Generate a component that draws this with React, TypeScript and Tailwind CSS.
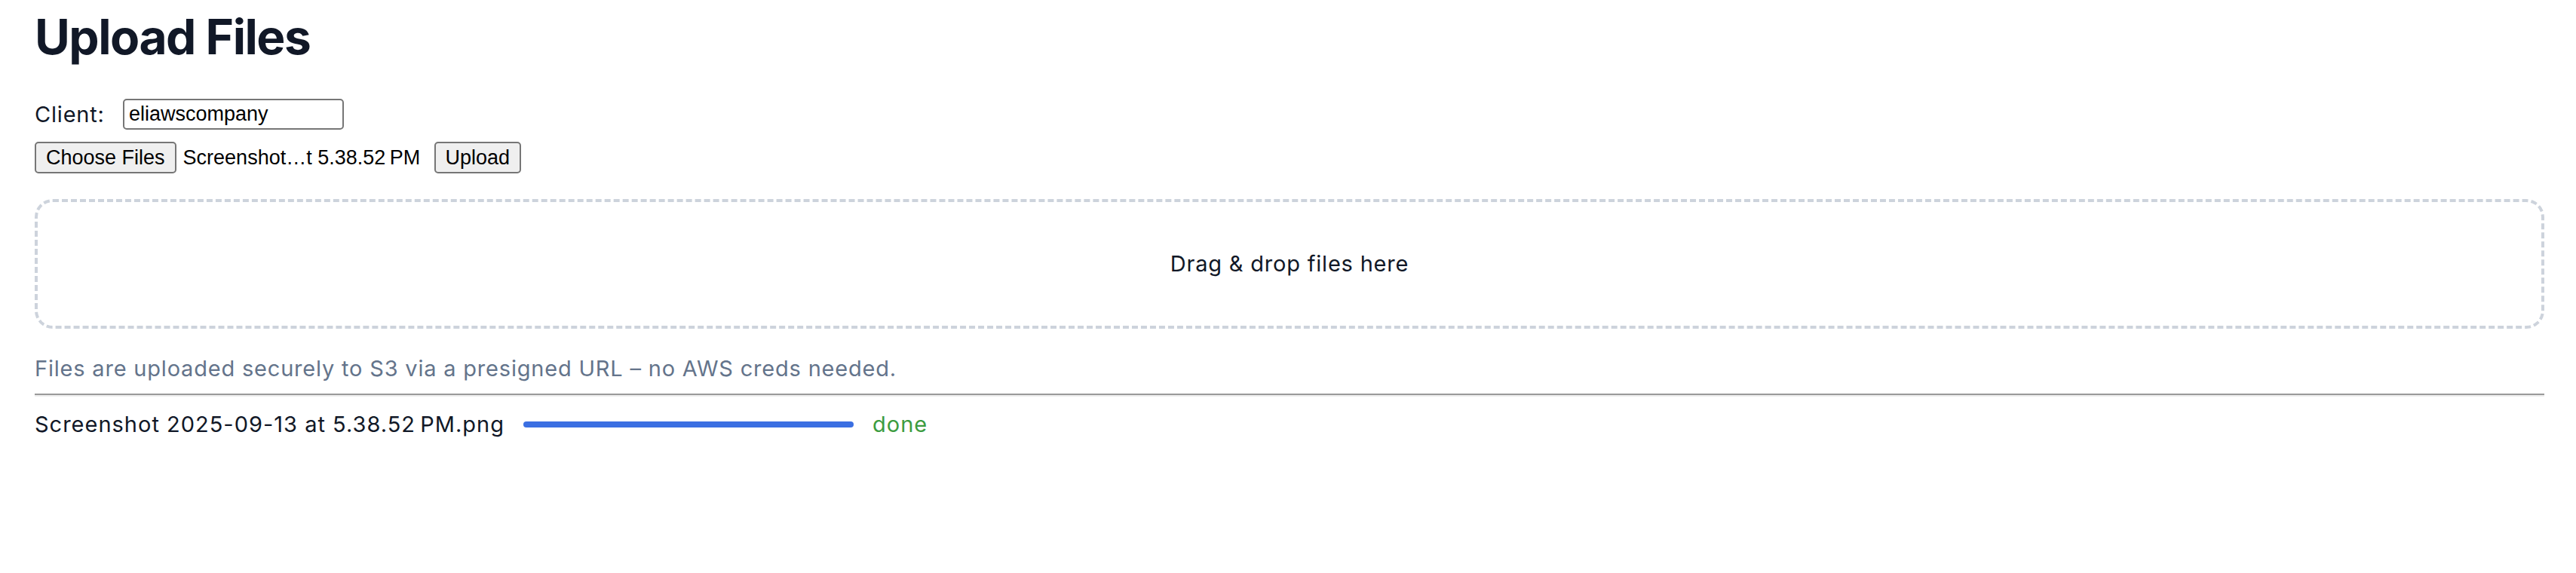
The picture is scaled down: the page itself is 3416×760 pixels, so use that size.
export default function App() {
  return (
    <div className="min-h-screen bg-white pl-[46px] pr-[42px] pt-[9px] text-[#111827] font-['Inter',sans-serif]">
      <h1 className="text-[64px] leading-[80px] font-bold tracking-[-1.5px]">Upload Files</h1>

      <div className="mt-[42px] flex items-center">
        <label className="w-[117px] shrink-0 text-[29px] leading-[40px] tracking-[0.8px]">Client:</label>
        <div className="flex h-[41px] w-[293px] items-center rounded-[5px] border-2 border-[#767676] px-[6px] font-['Liberation_Sans',Arial,sans-serif] text-[27px] text-black">
          eliawscompany
        </div>
      </div>

      <div className="mt-[16px] flex items-center font-['Liberation_Sans',Arial,sans-serif] text-[27px] text-black">
        <button className="flex h-[42px] items-center rounded-[5px] border-2 border-[#767676] bg-[#efefef] px-[13px]">
          Choose Files
        </button>
        <span className="ml-[9px] w-[305px] whitespace-nowrap">Screenshot…t 5.38.52{'\u202F'}PM</span>
        <button className="ml-[28px] flex h-[42px] items-center rounded-[5px] border-2 border-[#767676] bg-[#efefef] px-[13px]">
          Upload
        </button>
      </div>

      <div className="mt-[34px] flex h-[172px] items-center justify-center rounded-[24px] border-4 border-dashed border-[#cdd3dc] text-[29px] tracking-[0.8px]">
        Drag &amp; drop files here
      </div>

      <p className="mt-[33px] text-[29px] leading-[40px] tracking-[0.8px] text-[#64748b]">
        Files are uploaded securely to S3 via a presigned URL – no AWS creds needed.
      </p>

      <div className="mt-[13px] border-t-2 border-b-2 border-t-[#9a9a9a] border-b-[#ececec]" />

      <div className="mt-[17px] flex items-center gap-[25px] text-[29px] leading-[40px] tracking-[1px]">
        <span>Screenshot 2025-09-13 at 5.38.52{'\u202F'}PM.png</span>
        <div className="h-[8px] w-[438px] rounded-full bg-[#3b6fe2]" />
        <span className="text-[#3c9c40]">done</span>
      </div>
    </div>
  );
}
